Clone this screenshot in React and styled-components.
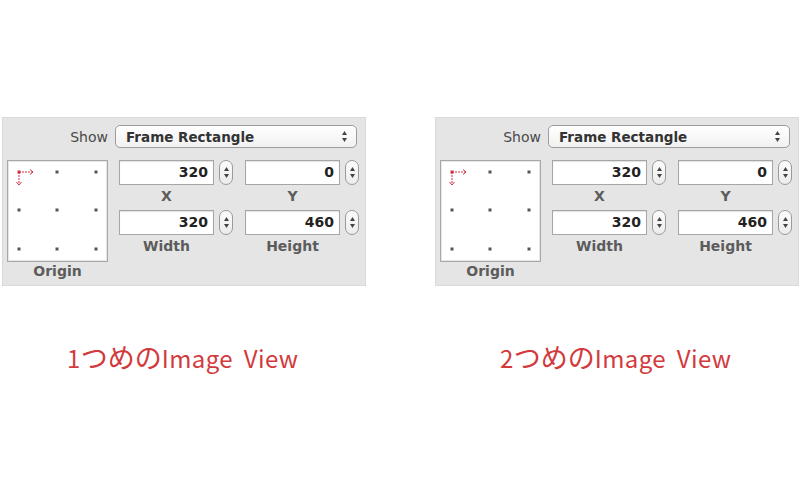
import React from "react";
import styled, { createGlobalStyle } from "styled-components";

const Global = createGlobalStyle`
  html, body { margin: 0; padding: 0; background: #fff; }
  body { width: 800px; height: 478px; overflow: hidden; font-family: "DejaVu Sans", "Liberation Sans", sans-serif; }
`;

const Page = styled.div`
  display: flex;
  gap: 69px;
  padding: 117px 0 0 2px;
`;

const Column = styled.div`
  display: flex;
  flex-direction: column;
  width: 364px;
`;

const Panel = styled.div`
  box-sizing: border-box;
  height: 169px;
  background: #e5e5e5;
  border: 1px solid #dadada;
  padding: 7px 8px 0 4px;
  display: flex;
  flex-direction: column;
`;

const ShowRow = styled.div`
  display: flex;
  align-items: center;
  height: 23px;
`;

const ShowLabel = styled.div`
  width: 108px;
  text-align: right;
  padding-right: 7px;
  box-sizing: border-box;
  font-size: 14px;
  color: #4a4a4a;
`;

const Select = styled.div`
  flex: 1;
  height: 23px;
  box-sizing: border-box;
  border: 1px solid #9c9c9c;
  border-radius: 5px;
  background: linear-gradient(#ffffff, #f1f1f1);
  display: flex;
  align-items: center;
  justify-content: space-between;
  padding: 0 8px 0 10px;
  font-size: 13.5px;
  color: #333;
  font-weight: 600;
`;

const Body = styled.div`
  display: flex;
  margin-top: 12px;
`;

const OriginCol = styled.div`
  display: flex;
  flex-direction: column;
  align-items: center;
  width: 101px;
  margin-right: 11px;
`;

const OriginBox = styled.div`
  width: 101px;
  height: 102px;
  box-sizing: border-box;
  background: #fff;
  border: 1px solid #a8a8a8;
  box-shadow: inset 0 0 0 1px #e6e6e6;
`;

const Label = styled.div`
  font-size: 14px;
  font-weight: 600;
  color: #5c5c5c;
  text-align: center;
  line-height: 16px;
  margin-top: ${(p) => p.$mt || 0}px;
`;

const Grid = styled.div`
  display: grid;
  grid-template-columns: 126px 126px;
  grid-auto-rows: 50px;
`;

const Cell = styled.div`
  display: flex;
  flex-direction: column;
`;

const FieldRow = styled.div`
  display: flex;
  align-items: center;
  gap: 5px;
`;

const Field = styled.div`
  width: 95px;
  height: 25px;
  box-sizing: border-box;
  background: #fff;
  border: 1px solid #a6a6a6;
  box-shadow: inset 0 1px 1px rgba(0,0,0,0.12);
  font-size: 14px;
  color: #222;
  text-align: right;
  padding: 0 5px;
  line-height: 23px;
  font-weight: 600;
`;

const Stepper = styled.div`
  width: 14px;
  height: 25px;
  box-sizing: border-box;
  border: 1px solid #9a9a9a;
  border-radius: 7px;
  background: linear-gradient(#fcfcfc, #ececec);
  display: flex;
  align-items: center;
  justify-content: center;
`;

const FieldLabel = styled.div`
  width: 95px;
  text-align: center;
  font-size: 14px;
  font-weight: 600;
  color: #5c5c5c;
  line-height: 16px;
  margin-top: 3px;
`;

const Caption = styled.div`
  margin-top: 56px;
  padding-left: ${(p) => p.$pl}px;
  font-family: "Noto Sans CJK JP", "Noto Sans", sans-serif;
  font-size: 24px;
  color: #d23a3e;
  line-height: 30px;
  white-space: nowrap;
  word-spacing: 5px;
  letter-spacing: 0.4px;
`;

const Kana = styled.span`
  font-size: 27px;
  letter-spacing: 0;
`;

function UpDown() {
  return (
    <svg width="7" height="13" viewBox="0 0 7 13">
      <path d="M3.5 1 L6 5 L1 5 Z" fill="#444" />
      <path d="M3.5 12 L6 8 L1 8 Z" fill="#444" />
    </svg>
  );
}

function OriginDrawing() {
  const pts = [11, 49, 88];
  return (
    <svg width="99" height="100" viewBox="0 0 99 100">
      {pts.map((y) =>
        pts.map((x) =>
          x === 11 && y === 11 ? null : (
            <rect key={x + "-" + y} x={x - 1.5} y={y - 1.5} width="3" height="3" fill="#555" />
          )
        )
      )}
      <g stroke="#d03040" strokeWidth="1" fill="none">
        <line x1="11" y1="11" x2="24" y2="11" strokeDasharray="2 1" />
        <path d="M22 8.5 L25 11 L22 13.5" />
        <line x1="11" y1="11" x2="11" y2="23" strokeDasharray="2 1" />
        <path d="M8.5 21 L11 24 L13.5 21" />
      </g>
      <rect x="9.5" y="9.5" width="3" height="3" fill="#d03040" />
    </svg>
  );
}

function NumField({ value, label }) {
  return (
    <Cell>
      <FieldRow>
        <Field>{value}</Field>
        <Stepper>
          <UpDown />
        </Stepper>
      </FieldRow>
      <FieldLabel>{label}</FieldLabel>
    </Cell>
  );
}

function Inspector() {
  return (
    <Panel>
      <ShowRow>
        <ShowLabel>Show</ShowLabel>
        <Select>
          <span>Frame Rectangle</span>
          <UpDown />
        </Select>
      </ShowRow>
      <Body>
        <OriginCol>
          <OriginBox>
            <OriginDrawing />
          </OriginBox>
          <Label $mt={1}>Origin</Label>
        </OriginCol>
        <Grid>
          <NumField value="320" label="X" />
          <NumField value="0" label="Y" />
          <NumField value="320" label="Width" />
          <NumField value="460" label="Height" />
        </Grid>
      </Body>
    </Panel>
  );
}

export default function App() {
  return (
    <>
      <Global />
      <Page>
        <Column>
          <Inspector />
          <Caption $pl={65}>
            1<Kana>つめの</Kana>Image View
          </Caption>
        </Column>
        <Column>
          <Inspector />
          <Caption $pl={65}>
            2<Kana>つめの</Kana>Image View
          </Caption>
        </Column>
      </Page>
    </>
  );
}
